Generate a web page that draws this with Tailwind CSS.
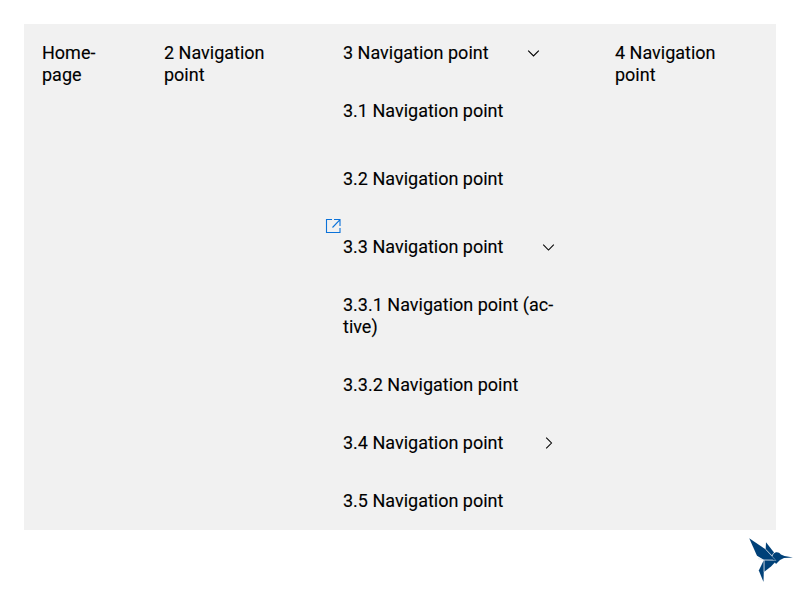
<!DOCTYPE html>
<html lang="en">
<head>
<meta charset="utf-8">
<title>Navigation</title>
<script src="https://cdn.jsdelivr.net/npm/@tailwindcss/browser@4"></script>
</head>
<body class="h-[600px] overflow-hidden bg-white p-6 font-['Roboto',sans-serif] text-[18px] leading-[22px] text-black">
<nav class="h-[506px] bg-[#f1f1f1] [-webkit-text-stroke:0.12px_#000]">
  <ul class="flex">
    <li class="w-[122px] p-[18px]">Home-<br>page</li>
    <li class="w-[179px] p-[18px]">2 Navigation<br>point</li>
    <li class="w-[272px]">
      <div class="flex items-center p-[18px]">
        <span class="w-[182px]">3 Navigation point</span>
        <svg class="h-4 w-4" viewBox="0 0 16 16" fill="none" stroke="#000" stroke-width="1.15"><path d="M3.2 5.7 8.5 11 13.8 5.7"/></svg>
      </div>
      <ul>
        <li class="mb-2.5 p-[18px]">3.1 Navigation point</li>
        <li class="mb-2.5 p-[18px]">3.2 Navigation point</li>
        <li>
          <div class="relative flex items-center p-[18px]">
            <svg class="absolute left-0 top-0 h-4 w-4" viewBox="0 0 16 16" fill="none" stroke="#0b72d9" stroke-width="1.1"><path d="M7 1.5H1.5v13H15V10M9 1.5h6V8M14.8 1.8 7.5 9.5"/></svg>
            <span class="w-[197px]">3.3 Navigation point</span>
            <svg class="h-4 w-4" viewBox="0 0 16 16" fill="none" stroke="#000" stroke-width="1.05"><path d="M3.2 5.7 8.5 11 13.8 5.7"/></svg>
          </div>
          <ul>
            <li class="p-[18px]">3.3.1 Navigation point (ac-<br>tive)</li>
            <li class="p-[18px]">3.3.2 Navigation point</li>
          </ul>
        </li>
        <li class="flex items-center p-[18px]">
          <span class="w-[197px]">3.4 Navigation point</span>
          <svg class="h-4 w-4" viewBox="0 0 16 16" fill="none" stroke="#000" stroke-width="1.05"><path d="M6.2 2.7 11.5 8 6.2 13.3"/></svg>
        </li>
        <li class="p-[18px]">3.5 Navigation point</li>
      </ul>
    </li>
    <li class="w-[179px] p-[18px]">4 Navigation<br>point</li>
  </ul>
</nav>
<div class="-mr-[18px] mt-[7px] flex justify-end">
  <svg class="h-[46px] w-[46px]" viewBox="0 0 46 46" fill="#004178">
    <path d="M1.2 1.2 17.5 12.3 27.3 22.7 15.8 22.7 9 18.8z"/>
    <path d="M18 5.3 26 15.6 24 18.6 17.7 12z"/>
    <path d="M25.2 17.2c2.4-3 5.7-2.4 7.7.3l3.6 1.6 8.5 1.3-9 .6-4 2-4 4-4.3-6.5z"/>
    <path d="M16.3 23.2H29l-6 6.3-6.7 5.2z"/>
    <path d="M15.8 23.3v10.4l-.3 11.2-4.7-11.3z"/>
    <g fill="none" stroke="#c5d3df" stroke-width=".5">
      <path d="M17.5 12.3 27.3 22.8M10 21.6l6 1.4 12.2.5M24 18.6l1.6-2.5M16 23v12"/>
    </g>
  </svg>
</div>
</body>
</html>
